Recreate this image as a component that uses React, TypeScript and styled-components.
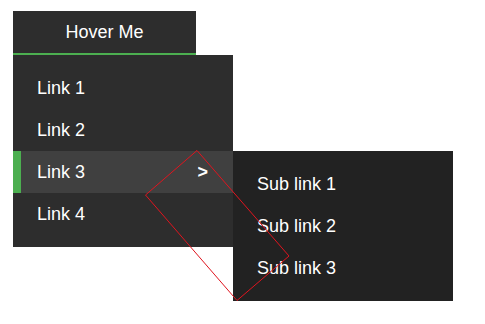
import React from 'react';
import styled, { createGlobalStyle } from 'styled-components';

const GlobalStyle = createGlobalStyle`
  html, body {
    margin: 0;
    background: #ffffff;
    font-family: "Liberation Sans", Arial, sans-serif;
  }
`;

const Page = styled.div`
  position: relative;
  box-sizing: border-box;
  min-height: 324px;
  padding: 11px 13px;
`;

const Nav = styled.div`
  position: relative;
  width: 220px;
`;

const Trigger = styled.div`
  width: 183px;
  height: 42px;
  display: flex;
  align-items: center;
  justify-content: center;
  background: #2d2d2d;
  color: #ffffff;
  font-size: 18px;
  border-bottom: 2px solid #4caf50;
`;

const Menu = styled.ul<{ $dark?: boolean }>`
  list-style: none;
  margin: 0;
  padding: 12px 0;
  width: 220px;
  background: ${(p) => (p.$dark ? '#222222' : '#2d2d2d')};
`;

const Item = styled.li<{ $active?: boolean }>`
  position: relative;
  height: 42px;
  display: flex;
  align-items: center;
  justify-content: space-between;
  padding: 0 25px 0 24px;
  color: #ffffff;
  font-size: 18px;
  background: ${(p) => (p.$active ? '#404040' : 'transparent')};
  box-shadow: ${(p) => (p.$active ? 'inset 8px 0 0 #4caf50' : 'none')};
`;

const Arrow = styled.span`
  font-size: 18px;
  font-weight: bold;
`;

const Flyout = styled(Menu)`
  position: absolute;
  left: 100%;
  top: 0;
  margin: 0;
`;

const SafeZone = styled.svg`
  position: absolute;
  left: 0;
  top: 0;
  pointer-events: none;
`;

export default function App() {
  return (
    <Page>
      <GlobalStyle />
      <Nav>
        <Trigger>Hover Me</Trigger>
        <Menu>
          <Item>Link 1</Item>
          <Item>Link 2</Item>
          <Item $active>
            Link 3
            <Arrow>&gt;</Arrow>
            <Flyout $dark>
              <Item>Sub link 1</Item>
              <Item>Sub link 2</Item>
              <Item>Sub link 3</Item>
            </Flyout>
          </Item>
          <Item>Link 4</Item>
        </Menu>
      </Nav>
      <SafeZone width="485" height="324" viewBox="0 0 485 324">
        <polygon
          points="197,150.5 289,256 237,300.5 145.5,195"
          fill="none"
          stroke="#e0141e"
          strokeWidth="1"
        />
      </SafeZone>
    </Page>
  );
}
